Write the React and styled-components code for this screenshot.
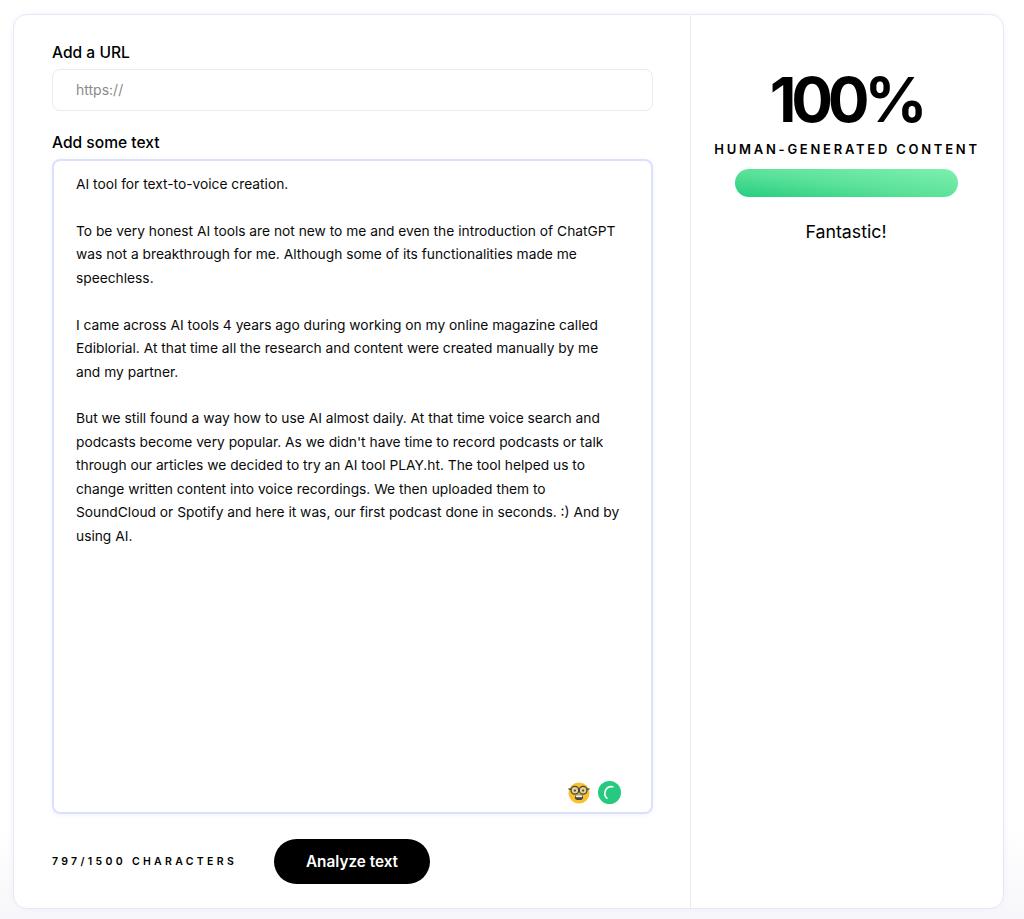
import React from "react";
import styled, { createGlobalStyle } from "styled-components";

const Global = createGlobalStyle`
  html, body { margin: 0; padding: 0; background: #fff; }
  body { font-family: "Inter", "Noto Sans", sans-serif; color: #000; }
  * { box-sizing: border-box; }
`;

const Page = styled.div`
  width: 1024px;
  height: 919px;
  padding: 14px 20px 10px 13px;
  background: linear-gradient(180deg, #fff 0%, #fff 90%, #f7f7fb 100%);
  overflow: hidden;
`;

const Card = styled.main`
  display: grid;
  grid-template-columns: 677px 1fr;
  height: 895px;
  background: #fff;
  border: 1px solid #e6e8f5;
  border-radius: 14px;
  box-shadow: 0 0 6px rgba(220, 224, 245, 0.35);
`;

const FormColumn = styled.section`
  display: flex;
  flex-direction: column;
  padding: 28px 37px 23px 38px;
  border-right: 1px solid #e9ebf3;
`;

const Label = styled.label`
  display: block;
  height: 20px;
  font-size: 15.6px;
  font-weight: 500;
  line-height: 20px;
  margin-bottom: 6px;
`;

const UrlField = styled.div`
  height: 42px;
  margin-bottom: 22px;
  padding: 0 23px;
  border: 1px solid #e9ebf3;
  border-radius: 8px;
  font-size: 14px;
  line-height: 40px;
  color: #8a8a8a;
`;

const TextArea = styled.div`
  position: relative;
  height: 655px;
  padding: 12px 22px;
  border: 2px solid #dbe1fc;
  border-radius: 8px;
  font-size: 13.78px;
  line-height: 23.45px;
  color: #0a0a0a;
  box-shadow: 0 1px 4px rgba(213, 220, 251, 0.35);
`;

const Paragraph = styled.p`
  margin: 0 0 23.45px;
  white-space: nowrap;
`;

const Badges = styled.div`
  position: absolute;
  right: 30px;
  bottom: 8px;
  display: flex;
  align-items: center;
  gap: 8px;
`;

const Footer = styled.div`
  display: flex;
  align-items: center;
  gap: 38px;
  margin-top: 25px;
`;

const Counter = styled.span`
  width: 184px;
  font-size: 10.5px;
  font-weight: 600;
  letter-spacing: 3.32px;
  white-space: nowrap;
`;

const AnalyzeButton = styled.button`
  width: 156px;
  height: 45px;
  border: 0;
  border-radius: 23px;
  background: #000;
  color: #fff;
  font-family: inherit;
  font-size: 15.3px;
  font-weight: 600;
`;

const ResultColumn = styled.aside`
  display: flex;
  flex-direction: column;
  align-items: center;
  padding: 48px 2px 0 0;
`;

const Score = styled.div`
  height: 74px;
  font-size: 62px;
  font-weight: 700;
  line-height: 74px;
  letter-spacing: -5.2px;
`;

const ScoreLabel = styled.div`
  height: 20px;
  margin: 2px 0 0 2px;
  font-size: 13px;
  font-weight: 600;
  line-height: 20px;
  letter-spacing: 2.75px;
  white-space: nowrap;
`;

const Meter = styled.div`
  width: 223px;
  height: 28px;
  margin-top: 10px;
  border-radius: 14px;
  background-image: linear-gradient(to top right, #25cd7f 0%, #5ae198 45%, #7ef0ae 100%);
`;

const Verdict = styled.div`
  margin-top: 23px;
  font-size: 17.8px;
  line-height: 24px;
`;

const NerdFace = () => (
  <svg width="22" height="22" viewBox="0 0 24 24" aria-hidden="true">
    <circle cx="12" cy="12" r="11.5" fill="#fbc02d" />
    <rect x="7.5" y="14" width="9" height="5.5" rx="2.5" fill="#444" />
    <rect x="8.5" y="14.5" width="7" height="2" rx="0.8" fill="#f2f2f2" />
    <circle cx="7.5" cy="9" r="4.2" fill="#e6d48a" stroke="#444" strokeWidth="1.4" />
    <circle cx="16.5" cy="9" r="4.2" fill="#e6d48a" stroke="#444" strokeWidth="1.4" />
    <circle cx="7.5" cy="9.3" r="1.2" fill="#444" />
    <circle cx="16.5" cy="9.3" r="1.2" fill="#444" />
    <path d="M0.5 7.5 L3.5 8 M20.5 8 L23.5 7.5" stroke="#444" strokeWidth="1.3" />
  </svg>
);

const Spinner = () => (
  <svg width="23" height="23" viewBox="0 0 24 24" aria-hidden="true">
    <circle cx="12" cy="12" r="12" fill="#25c97f" />
    <path d="M9.4 18 A7 7 0 0 1 15.5 6" fill="none" stroke="#fff" strokeWidth="1.7" strokeLinecap="round" />
  </svg>
);

export default function App() {
  return (
    <>
      <Global />
      <Page>
        <Card>
          <FormColumn>
            <Label>Add a URL</Label>
            <UrlField>https://</UrlField>
            <Label>Add some text</Label>
            <TextArea>
              <Paragraph>AI tool for text-to-voice creation.</Paragraph>
              <Paragraph>
                To be very honest AI tools are not new to me and even the introduction of ChatGPT<br />
                was not a breakthrough for me. Although some of its functionalities made me<br />
                speechless.
              </Paragraph>
              <Paragraph>
                I came across AI tools 4 years ago during working on my online magazine called<br />
                Ediblorial. At that time all the research and content were created manually by me<br />
                and my partner.
              </Paragraph>
              <Paragraph>
                But we still found a way how to use AI almost daily. At that time voice search and<br />
                podcasts become very popular. As we didn't have time to record podcasts or talk<br />
                through our articles we decided to try an AI tool PLAY.ht. The tool helped us to<br />
                change written content into voice recordings. We then uploaded them to<br />
                SoundCloud or Spotify and here it was, our first podcast done in seconds. :) And by<br />
                using AI.
              </Paragraph>
              <Badges>
                <NerdFace />
                <Spinner />
              </Badges>
            </TextArea>
            <Footer>
              <Counter>797/1500 CHARACTERS</Counter>
              <AnalyzeButton>Analyze text</AnalyzeButton>
            </Footer>
          </FormColumn>
          <ResultColumn>
            <Score>100%</Score>
            <ScoreLabel>HUMAN-GENERATED CONTENT</ScoreLabel>
            <Meter />
            <Verdict>Fantastic!</Verdict>
          </ResultColumn>
        </Card>
      </Page>
    </>
  );
}
